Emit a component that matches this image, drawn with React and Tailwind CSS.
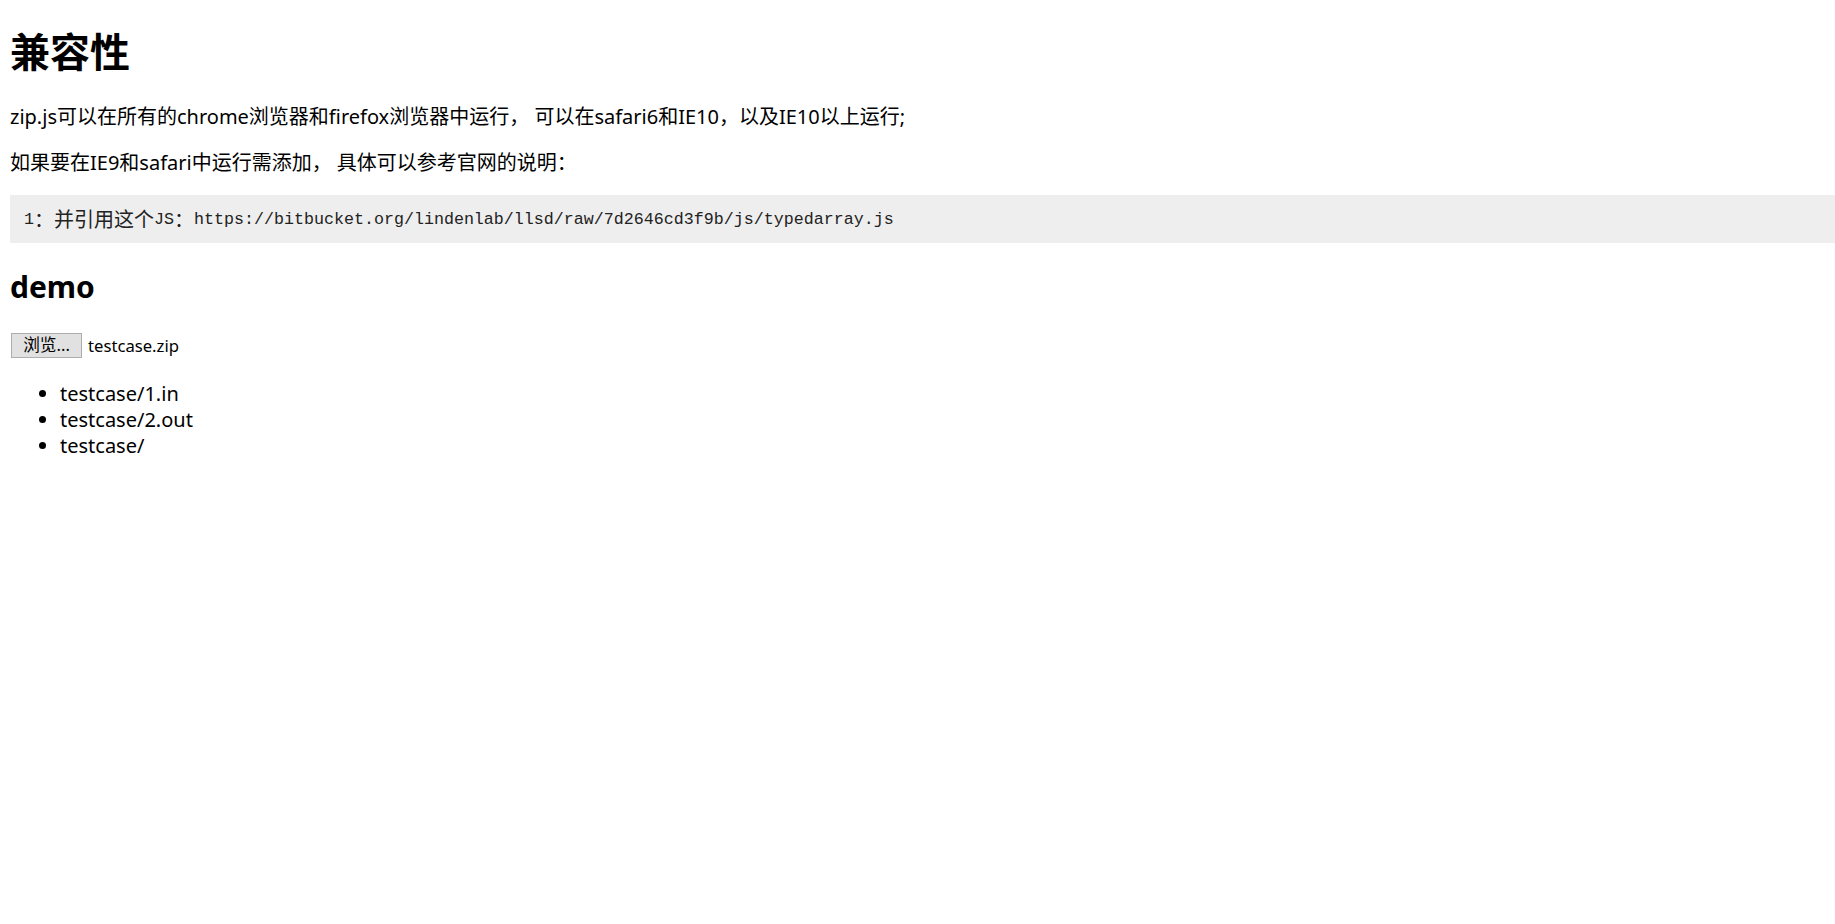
const FILES = ["testcase/1.in", "testcase/2.out", "testcase/"];

const SANS = "font-['Noto_Sans','Noto_Sans_CJK_SC',sans-serif]";
const MONO = "text-[16.67px] font-['Liberation_Mono',monospace]";
const CJK = "text-[20px] font-['Noto_Sans_CJK_SC',sans-serif]";

export default function App() {
  return (
    <div className={`min-h-screen bg-white text-black px-[10px] ${SANS}`}>
      <h1 className="pt-[28px] text-[40px] leading-[48px] font-bold">兼容性</h1>

      <p className="mt-[28px] text-[20px] leading-[26px]">
        zip.js可以在所有的chrome浏览器和firefox浏览器中运行， 可以在safari6和IE10，以及IE10以上运行;
      </p>
      <p className="mt-[20px] text-[20px] leading-[26px]">
        如果要在IE9和safari中运行需添加， 具体可以参考官网的说明：
      </p>

      {/* code block */}
      <div className="mt-[19px] -mr-[10px] h-[48px] flex items-center bg-[#eeeeee] px-[14px] text-[#222] whitespace-pre">
        <span className={MONO}>1</span>
        <span className={CJK}>：并引用这个</span>
        <span className={MONO}>JS</span>
        <span className={CJK}>：</span>
        <span className={MONO}>https://bitbucket.org/lindenlab/llsd/raw/7d2646cd3f9b/js/typedarray.js</span>
      </div>

      <h2 className="mt-[26px] text-[30px] leading-[36px] font-bold">demo</h2>

      {/* file input, drawn by hand */}
      <div className="mt-[28px] flex items-center gap-[6px] text-[16.67px]">
        <button className="ml-px h-[25px] w-[71px] border border-[#adadad] bg-[#e1e1e1] text-[16.67px] leading-none">
          浏览...
        </button>
        <span>testcase.zip</span>
      </div>

      <ul className="mt-[23px] pl-[50px] list-disc text-[20px] leading-[26px]">
        {FILES.map((f) => (
          <li key={f}>{f}</li>
        ))}
      </ul>
    </div>
  );
}
